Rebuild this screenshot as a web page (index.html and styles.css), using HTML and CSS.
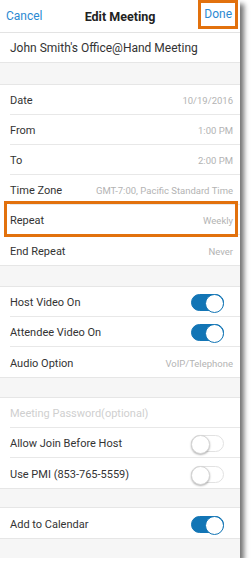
FILE: index.html
```html
<!DOCTYPE html>
<html>
<head>
<meta charset="utf-8">
<link rel="stylesheet" href="styles.css">
</head>
<body>
<div class="phone">
  <header class="nav">
    <span class="nav-btn">Cancel</span>
    <span class="nav-title">Edit Meeting</span>
    <span class="nav-btn done">Done</span>
  </header>
  <div class="topic">John Smith's Office@Hand Meeting</div>
  <div class="gap g22"></div>
  <section class="group">
    <div class="row"><span class="label">Date</span><span class="value">10/19/2016</span></div>
    <div class="row"><span class="label">From</span><span class="value">1:00 PM</span></div>
    <div class="row"><span class="label">To</span><span class="value">2:00 PM</span></div>
    <div class="row"><span class="label">Time Zone</span><span class="value">GMT-7:00, Pacific Standard Time</span></div>
    <div class="row highlight"><span class="label">Repeat</span><span class="value">Weekly</span></div>
    <div class="row"><span class="label">End Repeat</span><span class="value">Never</span></div>
  </section>
  <div class="gap g22 bt"></div>
  <section class="group">
    <div class="row"><span class="label">Host Video On</span><span class="toggle on"></span></div>
    <div class="row"><span class="label">Attendee Video On</span><span class="toggle on"></span></div>
    <div class="row"><span class="label">Audio Option</span><span class="value">VoIP/Telephone</span></div>
  </section>
  <div class="gap g21 bt"></div>
  <section class="group">
    <div class="row"><span class="label placeholder">Meeting Password(optional)</span></div>
    <div class="row"><span class="label">Allow Join Before Host</span><span class="toggle"></span></div>
    <div class="row"><span class="label">Use PMI (853-765-5559)</span><span class="toggle"></span></div>
  </section>
  <div class="gap g20 bt"></div>
  <section class="group last">
    <div class="row"><span class="label">Add to Calendar</span><span class="toggle on"></span></div>
  </section>
</div>
</body>
</html>
```
FILE: styles.css
```css
* { box-sizing: border-box; }
html, body { margin: 0; padding: 0; background: #fff; }
body { font-family: Roboto, "Noto Sans", sans-serif; }

.phone {
  width: 240px;
  height: 558px;
  background: #f6f6f6;
  box-shadow: 4px 4px 5px rgba(0,0,0,0.55);
}

.nav {
  height: 33px;
  background: #fff;
  border-bottom: 1px solid #e3e3e3;
  display: flex;
  align-items: center;
  justify-content: space-between;
  padding: 0 2px 0 6px;
  position: relative;
}
.nav-btn { color: #2b8ad2; font-size: 12px; }
.nav-title {
  position: absolute;
  left: 0; right: 0;
  text-align: center;
  font-weight: bold;
  font-size: 12.5px;
  color: #222;
  pointer-events: none;
}
.done {
  position: relative;
  z-index: 1;
  border: 3px solid #e2710d;
  padding: 4px 3px 5px 3px;
  margin-top: -3px;
}

.topic {
  height: 30px;
  background: #fff;
  display: flex;
  align-items: center;
  padding-left: 10px;
  font-size: 12px;
  color: #333;
  border-bottom: 1px solid #e6e6e6;
}

.gap {
  background: #f6f6f6;
  border-bottom: 1px solid #e6e6e6;
}
.bt { border-top: 1px solid #e6e6e6; }
.g20 { height: 20px; }
.g21 { height: 21px; }
.g22 { height: 22px; }

.group {
  background: #fff;
  padding-left: 10px;
}
.group.last { border-bottom: 1px solid #e6e6e6; }
.row {
  height: 30px;
  display: flex;
  align-items: center;
  justify-content: space-between;
  padding-right: 7px;
  padding-top: 2px;
  border-bottom: 1px solid #e8e8e8;
  position: relative;
}
.group .row:last-child { border-bottom: none; }

.label { font-size: 11px; color: #333; }
.placeholder { color: #cfcfcf; }
.value { font-size: 9.5px; color: #b3b3b3; }

.highlight::after {
  content: "";
  position: absolute;
  left: -6px;
  right: 2px;
  top: -4px;
  bottom: -3px;
  border: 3px solid #e2710d;
}

.toggle {
  width: 33px;
  height: 17px;
  border-radius: 9px;
  border: 1px solid #e2e2e2;
  background: #fff;
  position: relative;
  margin-right: 9px;
}
.toggle::after {
  content: "";
  position: absolute;
  top: -1px;
  left: -1px;
  width: 17px;
  height: 17px;
  border-radius: 50%;
  background: #fff;
  border: 1px solid #d6d6d6;
  box-shadow: 0 1px 2px rgba(0,0,0,0.3);
}
.toggle.on {
  background: #1275b5;
  border-color: #1275b5;
}
.toggle.on::after {
  left: auto;
  right: -1px;
  border: 1.5px solid #1275b5;
  box-shadow: none;
}
```
